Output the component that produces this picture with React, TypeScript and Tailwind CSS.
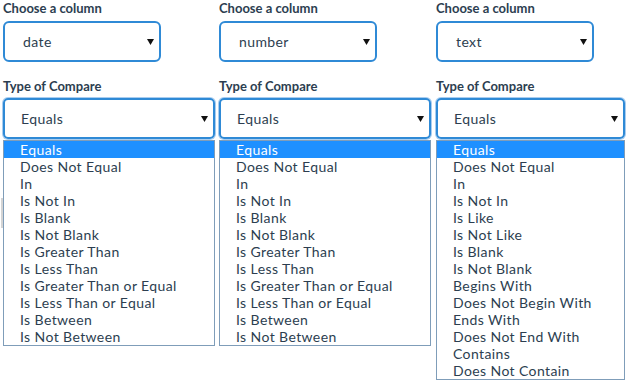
import React from 'react';

const baseOps = ['Equals', 'Does Not Equal', 'In', 'Is Not In'];
const numberOps = [
  ...baseOps,
  'Is Blank',
  'Is Not Blank',
  'Is Greater Than',
  'Is Less Than',
  'Is Greater Than or Equal',
  'Is Less Than or Equal',
  'Is Between',
  'Is Not Between',
];
const textOps = [
  ...baseOps,
  'Is Like',
  'Is Not Like',
  'Is Blank',
  'Is Not Blank',
  'Begins With',
  'Does Not Begin With',
  'Ends With',
  'Does Not End With',
  'Contains',
  'Does Not Contain',
];

const columns = [
  { value: 'date', ops: numberOps, width: 'w-[212px]' },
  { value: 'number', ops: numberOps, width: 'w-[212px]' },
  { value: 'text', ops: textOps, width: 'w-[189px] ml-[1px]' },
];

function Arrow() {
  return (
    <svg width="7" height="6" viewBox="0 0 7 6" className="shrink-0">
      <path d="M0 0 H7 L3.5 6 Z" fill="#111" />
    </svg>
  );
}

function FilterColumn({ value, ops, width }: { value: string; ops: string[]; width: string }) {
  return (
    <div className={`${width} relative z-10 flex flex-col`}>
      <div className="h-[17px] text-[13px] font-bold leading-[17px] text-[#2c3e50]">Choose a column</div>
      <div className="mt-[4px] flex h-[41px] w-[158px] items-center justify-between rounded-[6px] border-2 border-[#2f8ad6] pl-[18px] pr-[5px] text-[14px] tracking-[0.4px] text-[#2c3e50]">
        <span>{value}</span>
        <Arrow />
      </div>
      <div className="mt-[16px] h-[17px] text-[13px] font-bold leading-[17px] text-[#2c3e50]">Type of Compare</div>
      <div className="mt-[3px] flex h-[41px] items-center justify-between rounded-[5px] border-2 border-[#2f8ad6] pl-[16px] pr-[5px] text-[14px] tracking-[0.4px] text-[#2c3e50] shadow-[0_0_0_1px_#a9cdf0]">
        <span>Equals</span>
        <Arrow />
      </div>
      <div className="mt-[1px] border border-[#7f9db9] bg-white">
        {ops.map((op, i) => (
          <div
            key={op}
            className={
              i === 0
                ? 'h-[17px] bg-[#1e90ff] pl-[16px] text-[14px] leading-[17px] tracking-[0.4px] text-white'
                : 'h-[17px] pl-[16px] text-[14px] leading-[17px] tracking-[0.4px] text-[#2c3e50]'
            }
          >
            {op}
          </div>
        ))}
      </div>
    </div>
  );
}

export default function App() {
  return (
    <div className="relative h-[384px] w-[627px] overflow-hidden bg-white font-['Lato',sans-serif]">
      {/* faint element peeking out from under the open list */}
      <div className="absolute left-[1px] top-[198px] h-[30px] w-[3px] bg-[#d4d4d4]" />
      <div className="flex gap-[4px] pl-[3px]">
        {columns.map((c) => (
          <FilterColumn key={c.value} value={c.value} ops={c.ops} width={c.width} />
        ))}
      </div>
    </div>
  );
}
